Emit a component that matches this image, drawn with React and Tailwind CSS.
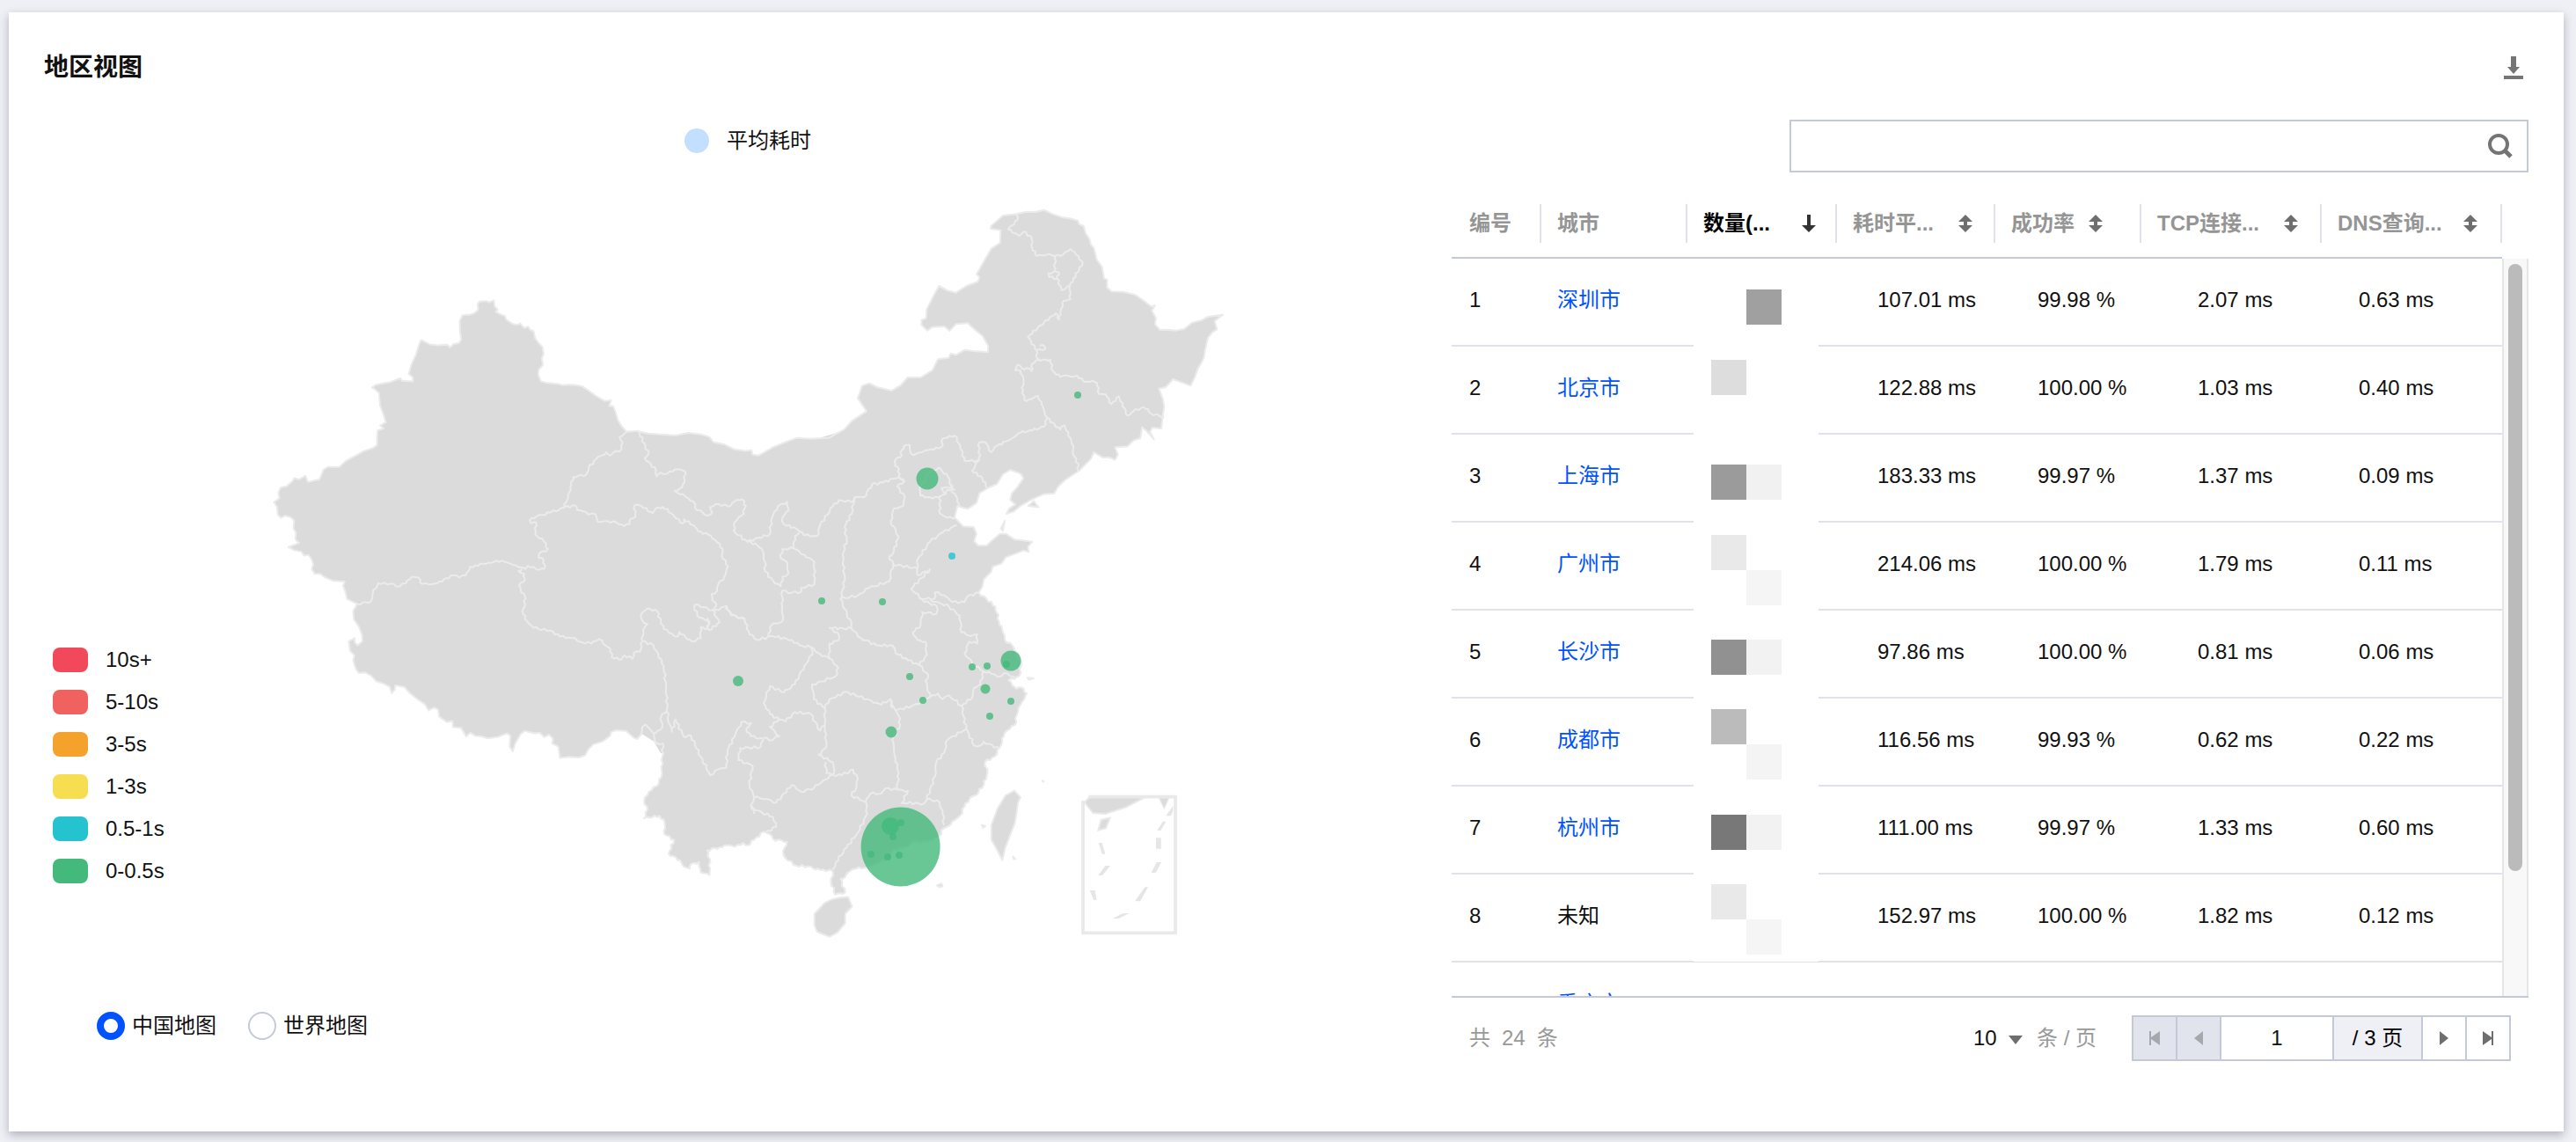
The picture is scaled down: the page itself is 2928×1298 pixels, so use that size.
import React, { useState } from 'react';

const LEVELS = [
    { label: '10s+', color: 'bg-[#f1495b]' },
    { label: '5-10s', color: 'bg-[#ef6260]' },
    { label: '3-5s', color: 'bg-[#f5a22d]' },
    { label: '1-3s', color: 'bg-[#f7de51]' },
    { label: '0.5-1s', color: 'bg-[#25c2d0]' },
    { label: '0-0.5s', color: 'bg-[#43b97c]' },
];

const COLUMNS = [
    { key: 'id', title: '编号', width: 'w-[102px]', head: 'pl-5', pad: 'pl-5' },
    { key: 'city', title: '城市', width: 'w-[166px]', head: 'pl-[18px]', pad: 'pl-[18px]' },
    { key: 'count', title: '数量(...', width: 'w-[170px]', head: 'pl-[18px]', pad: 'pl-8', sort: 'desc', gap: 'ml-9' },
    { key: 'cost', title: '耗时平...', width: 'w-[180px]', head: 'pl-[18px]', pad: 'pl-[46px]', sort: 'none', gap: 'ml-7' },
    { key: 'rate', title: '成功率', width: 'w-[166px]', head: 'pl-[18px]', pad: 'pl-12', sort: 'none', gap: 'ml-4' },
    { key: 'tcp', title: 'TCP连接...', width: 'w-[205px]', head: 'pl-[18px]', pad: 'pl-16', sort: 'none', gap: 'ml-7' },
    { key: 'dns', title: 'DNS查询...', width: 'w-[205px]', head: 'pl-[18px]', pad: 'pl-[42px]', sort: 'none', gap: 'ml-6' },
];

const ROWS = [
    { id: 1, city: '深圳市', cost: '107.01 ms', rate: '99.98 %', tcp: '2.07 ms', dns: '0.63 ms' },
    { id: 2, city: '北京市', cost: '122.88 ms', rate: '100.00 %', tcp: '1.03 ms', dns: '0.40 ms' },
    { id: 3, city: '上海市', cost: '183.33 ms', rate: '99.97 %', tcp: '1.37 ms', dns: '0.09 ms' },
    { id: 4, city: '广州市', cost: '214.06 ms', rate: '100.00 %', tcp: '1.79 ms', dns: '0.11 ms' },
    { id: 5, city: '长沙市', cost: '97.86 ms', rate: '100.00 %', tcp: '0.81 ms', dns: '0.06 ms' },
    { id: 6, city: '成都市', cost: '116.56 ms', rate: '99.93 %', tcp: '0.62 ms', dns: '0.22 ms' },
    { id: 7, city: '杭州市', cost: '111.00 ms', rate: '99.97 %', tcp: '1.33 ms', dns: '0.60 ms' },
    { id: 8, city: '未知', cost: '152.97 ms', rate: '100.00 %', tcp: '1.82 ms', dns: '0.12 ms' },
    { id: 9, city: '重庆市', count: '6,466', cost: '268.89 ms', rate: '100.00 %', tcp: '2.13 ms', dns: '0.88 ms' },
];

// [column, top, fill] of the blocks that hide the counts
const MOSAIC = [
    [1, 35, '#a0a0a0'],
    [0, 115, '#dddddd'],
    [0, 234, '#9b9b9b'],
    [1, 234, '#f1f1f1'],
    [0, 314, '#e9e9e9'],
    [1, 354, '#f5f5f5'],
    [0, 433, '#919191'],
    [1, 433, '#f2f2f2'],
    [0, 512, '#bbbbbb'],
    [1, 552, '#f4f4f4'],
    [0, 632, '#787878'],
    [1, 632, '#f2f2f2'],
    [0, 711, '#e9e9e9'],
    [1, 751, '#f5f5f5'],
];

// Map parts, each drawn in its own local grid
const WEST = {
    transform: 'translate(290 320) scale(0.35714)',
    outline:
        'M1220,475 1182,478 1168,462 1155,442 1147,415 1139,396 1127,396 1133,378 1112,380 1085,364 1060,346 1040,333 1018,329 1000,328 980,330 965,326 930,323 910,318 901,297 902,282 916,265 912,246 918,230 914,208 901,194 891,180 886,158 876,154 868,143 857,148 843,133 835,138 820,135 800,122 795,110 780,104 766,96 772,90 762,78 760,60 745,66 735,62 714,64 708,72 710,90 698,100 682,106 660,107 651,125 652,160 656,185 648,196 632,199 620,210 612,201 580,203 556,200 528,186 520,205 512,232 497,265 489,294 502,305 502,318 468,316 462,308 430,320 385,328 372,337 380,342 394,355 398,395 410,428 416,448 398,458 409,468 390,474 388,496 388,520 375,530 345,540 320,554 290,570 268,590 232,590 218,598 205,630 190,633 168,638 160,618 140,630 124,626 120,634 100,652 82,655 74,672 77,690 60,702 70,718 72,742 82,752 95,745 112,750 124,760 122,785 130,800 128,818 132,825 140,832 106,845 125,855 148,860 155,872 170,870 180,885 185,900 180,915 190,930 207,930 220,940 250,953 285,955 280,968 288,990 292,1010 312,1020 325,1026 312,1048 314,1075 330,1098 340,1125 341,1145 326,1158 317,1148 316,1135 298,1145 302,1175 316,1190 312,1205 316,1220 322,1235 330,1246 350,1244 370,1255 385,1272 410,1280 428,1290 435,1310 445,1298 446,1285 475,1290 490,1308 520,1332 540,1345 552,1365 568,1356 582,1362 586,1385 610,1402 628,1398 630,1418 655,1420 672,1448 685,1436 700,1446 718,1447 740,1454 770,1450 802,1438 812,1445 810,1480 820,1495 828,1470 845,1440 858,1430 890,1438 905,1436 920,1450 935,1442 948,1455 945,1470 965,1480 970,1516 1000,1513 1030,1515 1050,1508 1060,1490 1075,1474 1105,1464 1130,1446 1133,1434 1148,1428 1180,1430 1205,1452 1216,1456 1230,1440 1232,1418 1242,1410 1256,1424 1268,1438 1274,1472',
    close: 'L1290,1500 1568,1568 1568,540 1545,540 1520,530 1490,518 1458,512 1445,495 1400,484 1330,490 1270,485Z',
    borders:
        'M1182,478 1160,495 1170,512 1166,534 1140,544 1128,554 1118,543 1085,565 1062,592 1054,614 1012,622 1003,655 996,690 984,708 984,720 940,735 895,748 874,760 878,770 893,766 892,805 918,826 932,852 905,865 903,880 918,885 920,914 905,917 868,905 860,915 835,908' +
        'M860,915 830,903 805,895 785,888 742,895 700,903 684,908 670,935 650,942 632,935 600,948 580,960 550,963 525,958 520,942 498,940 480,960 460,970 430,962 392,960 375,990 368,1018 325,1026' +
        'M850,915 838,922 857,930 855,955 840,968 848,990 858,1000 858,1035 850,1050 865,1080 880,1095 902,1107 940,1110 970,1130 1010,1135 1040,1148 1070,1152 1095,1138 1115,1158 1130,1168 1135,1196 1152,1197 1165,1203 1175,1190 1200,1200 1205,1182 1225,1178 1232,1145' +
        'M984,718 1020,713 1025,728 1050,732 1060,742 1082,740 1090,765 1115,762 1130,768 1148,765 1175,778 1192,772 1195,755 1210,750 1208,712 1230,715 1265,738 1275,722 1298,717 1330,742 1360,770 1365,757 1400,780 1410,795 1450,808 1470,830 1488,850 1485,872 1505,907 1498,930 1490,950 1475,960 1470,985 1453,995 1455,1015 1468,1028 1455,1045 1400,1028 1398,1045 1415,1070 1445,1080 1440,1105 1418,1100 1418,1135 1390,1145 1370,1132 1350,1115 1345,1130 1318,1118 1300,1105 1280,1050 1250,1040 1228,1060 1232,1078 1248,1090 1235,1110 1232,1145' +
        'M1455,1045 1478,1085 1445,1110 1440,1070M1460,1050 1500,1032 1515,1062 1560,1075' +
        'M1312,1365 1292,1385 1295,1420 1275,1438 1268,1438' +
        'M1220,475 1252,548 1240,562 1276,600 1278,620 1290,608 1310,612 1320,604 1345,598 1368,604 1366,640 1352,658 1335,666 1370,685 1395,700 1400,720 1440,745 1455,735 1448,718 1475,708 1505,716 1525,700 1550,693 1562,715 1548,745 1527,765 1524,795',
};

const NORTH_EAST = {
    transform: 'translate(960 220) scale(0.33333)',
    outline:
        'M0,803 25,775 75,742 45,698 60,655 85,647 110,660 160,672 190,655 215,627 260,627 300,602 318,565 355,560 362,545 380,550 410,533 440,537 488,541 490,520 470,485 445,465 420,442 380,445 358,468 340,453 300,455 282,467 262,448 262,432 278,425 280,395 300,355 322,315 350,330 380,338 415,315 455,300 460,285 450,275 470,240 500,188 530,168 532,125 498,120 500,110 540,75 585,70 620,62 650,63 680,56 710,70 745,82 765,84 795,92 800,105 815,110 822,135 835,155 840,175 850,185 860,225 878,250 885,290 895,293 895,320 910,334 950,335 990,345 1020,365 1045,385 1058,382 1048,400 1062,425 1058,445 1075,465 1100,464 1130,467 1158,462 1185,440 1215,433 1240,420 1290,413 1262,435 1270,463 1255,472 1240,490 1230,530 1225,560 1215,580 1205,595 1195,625 1180,655 1120,633 1095,660 1072,665 1085,700 1090,725 1085,760 1080,802 1050,798 1042,812 1055,838 1030,810 1015,797 1008,835 985,842 965,862 922,865 932,890 922,908 905,900 880,900 850,882 840,905 820,925 800,945 750,978 728,1000 715,1022 680,1025 640,1042 600,1065 575,1085 552,1092 560,1075 582,1060 565,1045 570,1022 590,1000 610,970 600,955 565,942 540,957 520,990 487,1005 460,1022 450,1055 420,1075 400,1070 385,1065 375,1105 398,1128 405,1135 440,1137 450,1160 442,1185 455,1200 485,1200 500,1185 530,1160 550,1160 580,1180 610,1183 640,1187 625,1205 628,1222 610,1217 590,1225 550,1240 535,1262 505,1272 500,1290 475,1315 470,1340 457,1361',
    close: 'L440,1400 0,1400Z',
    borders:
        'M585,70 590,90 558,122 595,145 610,130 638,150 640,185 655,213 690,208 720,212 745,208 770,190 785,200 812,237 800,260 780,290 768,315 740,330 725,290 698,285 695,272 715,265 720,212' +
        'M725,290 730,268 715,265M768,315 770,360 748,365 738,395 732,430 720,408 680,440 625,488 655,535 685,530 680,518 665,520' +
        'M655,535 655,560 665,567M660,567 640,580 638,605 622,595 612,600 590,583 582,603 600,605 610,635 605,680 620,708 640,700 660,690 672,720 682,745 690,768' +
        'M660,567 702,567 710,605 735,625 760,620 780,625 795,622 820,643 845,638 860,645 868,683 890,685 910,718 935,692 965,757 985,742 1020,728 1035,735 1045,750 1090,762' +
        'M690,765 735,805 750,790 780,860 778,880 798,930 795,945' +
        'M690,768 680,795 640,808 600,815 575,832 550,845 520,860 500,882 480,848 458,850 460,910' +
        'M455,912 435,945 470,970 487,1005' +
        'M460,912 408,910 395,860 375,825 335,835 330,865 285,875 260,883 235,892 225,885 222,857 210,857 195,875 190,900 175,905 172,928 185,940 185,965 205,985' +
        'M255,1005 258,1030 300,1040 330,1030 345,1025 330,1005 365,1000 352,965 320,935 285,955 270,985 255,1005' +
        'M325,1030 325,1090 350,1105 378,1105M345,1025 350,1010 375,1010 355,985M365,1010 385,1040 390,1065',
};

const SOUTH = {
    transform: 'translate(700 420) scale(0.35714 0.42092)',
    coast:
        'M1155,603 1180,620 1208,640 1220,680 1232,710 1238,730 1262,745 1270,760 1288,785 1290,800 1283,828 1250,840 1275,862 1290,858 1308,875 1300,890 1288,905 1280,925 1275,935 1270,960 1245,975 1235,990 1222,1020 1205,1045 1175,1060 1182,1090 1172,1120 1145,1150 1125,1160 1110,1180 1095,1205 1070,1220 1060,1232 1035,1245 1030,1260 990,1275 950,1275 920,1290 880,1300 870,1315 830,1335 800,1345 765,1348 745,1355 730,1370 715,1375 730,1412 698,1418 685,1385 690,1355 660,1350 635,1350 620,1342 575,1340 540,1320 532,1300 545,1275 500,1268 490,1255 470,1248 440,1270 420,1285 405,1278 380,1288 355,1285 330,1290 290,1298 298,1320 298,1365 270,1358 265,1330 240,1335 235,1348 215,1342 205,1325 168,1308 185,1270 155,1255 155,1222 140,1205 90,1212 100,1190 90,1165 105,1140 130,1125 145,1100 150,1010 128,1008',
    close: 'L0,940 0,200 72,170 190,178 455,232 728,165 1060,380 1070,560Z',
    north: 'M72,167 100,173 190,178 230,171 270,175 298,182 310,196 345,202 375,215 410,220 432,218 435,230 455,232 500,210 540,196 575,185 620,187 680,184 720,165 728,161',
    northClose: 'L800,400 72,400Z',
    islands:
        'M720,1425 740,1425 752,1450 730,1470 730,1495 705,1520 680,1532 640,1518 632,1500 632,1470 665,1440 690,1430Z' +
        'M1268,1137 1288,1155 1280,1170 1275,1200 1270,1225 1240,1290 1230,1325 1215,1300 1195,1270 1195,1230 1215,1185 1240,1150Z' +
        'M1165,1230 1176,1233 1168,1237ZM1264,1315 1272,1322 1266,1322ZM1022,1393 1036,1388 1040,1395 1030,1398ZM1310,832 1330,834 1315,838ZM1312,368 1330,355 1345,372ZM1225,430 1238,408 1232,436ZM1358,1110 1362,1112 1359,1113Z',
    borders:
        'M376,430 376,437 418,465 490,445 497,400 515,370 545,357 550,380 530,400 535,418 575,430 600,448 640,450 650,420 690,370 710,352 750,358 760,345 790,345 815,310 850,305 900,290 918,300' +
        'M418,465 445,470 465,485 475,520 475,545 500,570 525,585 530,560 550,550 545,520 525,510 530,485 565,483 570,450 585,440' +
        'M565,483 600,500 632,520 632,580 590,590 590,600 560,603 530,597 530,640 530,680 495,690 485,720' +
        'M350,638 365,660 410,675 425,715 450,730 500,720 560,730 585,745 620,750 650,768 680,780 708,805 700,828 655,842 625,850 630,890 665,915' +
        'M620,750 625,770 600,800 570,850 535,872 490,855 470,900 490,930 520,945 490,965 520,990 500,1000 470,995' +
        'M520,945 540,950 570,925 620,930 650,975 665,960 665,915' +
        'M470,1000 430,990 415,970 430,955 400,952 380,985 355,1030 352,1075 325,1080 300,1095 270,1045 240,990 215,990 190,945 178,978 165,940 160,860 152,800 120,745 85,733' +
        'M470,1000 460,1020 395,1022 390,1055 435,1070 425,1120 440,1155 430,1175 440,1200M440,1155 480,1160 510,1170 560,1122 590,1140 630,1130 660,1110 690,1095' +
        'M430,1175 445,1190 500,1208 510,1235 475,1250' +
        'M665,960 670,1020 645,1040 690,1060 695,1090 670,1090 668,1060M690,1095 720,1095 755,1080 770,1105 765,1130 750,1150 795,1168 800,1200 770,1250 735,1290 700,1330 690,1350' +
        'M795,1168 810,1145 845,1145 860,1130 895,1135 930,1138 910,1170 980,1172 990,1160 1030,1168 1040,1200 1045,1230' +
        'M895,1135 900,1090 890,1050 885,1020 880,1000 905,960 900,935 890,920 875,895' +
        'M665,915 680,890 700,885 730,870 800,890 820,900 845,905 875,890 880,915M890,920 940,910 970,898 1000,885' +
        'M680,780 680,740 710,730 705,710 680,698 750,700 780,725 830,745 880,745 890,765 930,785 965,798 995,825 985,840 1000,885' +
        'M965,798 990,770 985,735 960,730 945,710 970,690 975,655 1020,660 1022,640 975,622' +
        'M760,345 750,390 728,425 735,460 722,500 728,570 715,620 735,660 750,685 750,700M715,620 770,610 805,590 870,572 882,525' +
        'M918,300 895,315 920,345 915,368 885,375 875,410 900,450 885,490 870,505 882,525 960,538 962,510 1000,465 1040,440 1085,420' +
        'M960,538 960,555 1000,540 940,592 975,620 1015,618 1015,602 1045,610 1070,628 1110,628 1120,612 1155,603' +
        'M1000,622 1030,630 1060,640 1095,665 1100,710 1130,720 1150,715 1150,740 1125,735 1110,765 1135,795 1170,815 1195,822 1215,830 1235,820 1270,830' +
        'M1170,815 1160,850 1140,860 1135,885 1100,908M1000,885 1025,875 1040,890 1060,880 1100,908 1115,970 1055,1000 1045,1035 1020,1060 1015,1100 990,1160' +
        'M1115,970 1140,1015 1160,1015 1170,1005 1222,1025',
};

const GREEN = '#43b97c';

// [x, y, radius, fill]
const CITIES = [
    [1225, 449, 4, GREEN],
    [1054, 544, 12.5, GREEN],
    [1082, 632, 4, '#25c2d0'],
    [934, 683, 4, GREEN],
    [1003, 684, 4, GREEN],
    [839, 774, 6, GREEN],
    [1034, 769, 4, GREEN],
    [1049, 796, 4, GREEN],
    [1013, 832, 6.5, GREEN],
    [1105, 758, 4, GREEN],
    [1122, 757, 4, GREEN],
    [1149, 751, 11.5, GREEN],
    [1144, 755, 4, GREEN],
    [1120, 783, 5.5, GREEN],
    [1149, 797, 4, GREEN],
    [1125, 814, 4, GREEN],
    [1012, 939, 10, GREEN],
    [1024, 935, 4, GREEN],
    [1015, 951, 4, GREEN],
    [990, 971, 4, GREEN],
    [1009, 974, 4, GREEN],
    [1022, 972, 4, GREEN],
    [1023.6, 962.5, 45, GREEN],
];

// Breaks long border segments into short uneven ones
const roughen = (d) =>
    d
        .split('M')
        .filter(Boolean)
        .map((line) => {
            const points = line.split(' ').map((pair) => pair.split(',').map(Number));
            const out = [points[0]];
            for (let i = 1; i < points.length; i++) {
                const [x0, y0] = points[i - 1];
                const [x1, y1] = points[i];
                const length = Math.hypot(x1 - x0, y1 - y0);
                const steps = Math.max(1, Math.round(length / 9));
                for (let s = 1; s < steps; s++) {
                    const t = s / steps;
                    const shift = Math.sin(x0 * 12.9 + y0 * 7.3 + s * 2.4) * 3.5;
                    out.push([
                        Math.round(x0 + (x1 - x0) * t - ((y1 - y0) / length) * shift),
                        Math.round(y0 + (y1 - y0) * t + ((x1 - x0) / length) * shift),
                    ]);
                }
                out.push([x1, y1]);
            }
            return 'M' + out.map((p) => p.join(',')).join(' ');
        })
        .join('');

function Line({ d }) {
    return <path d={d} fill="none" stroke="#ebebeb" strokeWidth="2" strokeLinejoin="round" vectorEffect="non-scaling-stroke" />;
}

function ChinaMap() {
    return (
        <svg viewBox="50 174 1600 936" className="block w-full" role="img" aria-label="中国地图">
            <g fill="#dbdbdb">
                <path transform={WEST.transform} d={WEST.outline + WEST.close} />
                <path transform={NORTH_EAST.transform} d={NORTH_EAST.outline + NORTH_EAST.close} />
                <g transform={SOUTH.transform}>
                    <path d={SOUTH.coast + SOUTH.close} />
                    <path d={SOUTH.north + SOUTH.northClose} />
                    <path d={SOUTH.islands} />
                </g>
            </g>
            <g transform={WEST.transform}>
                <Line d={WEST.outline} />
                <Line d={roughen(WEST.borders)} />
            </g>
            <g transform={NORTH_EAST.transform}>
                <Line d={NORTH_EAST.outline} />
                <Line d={roughen(NORTH_EAST.borders)} />
            </g>
            <g transform={SOUTH.transform}>
                <Line d={roughen(SOUTH.coast)} />
                <Line d={SOUTH.north} />
                <Line d={SOUTH.islands} />
                <Line d={roughen(SOUTH.borders)} />
            </g>

            {/* South China Sea inset */}
            <g transform="translate(1160 860) scale(0.33333)">
                <path d="M218,155 236,138 425,138 360,172 290,195 247,192Z" fill="#dbdbdb" stroke="#e9e9e9" strokeWidth="6" />
                <path d="M472,140H506L490,177Z" fill="#dbdbdb" stroke="#e9e9e9" strokeWidth="4" />
                <path d="M213,601V150M232,137H528V601H208" fill="none" stroke="#e9e9e9" strokeWidth="11" />
                <path d="M275,215 305,209 291,244 265,251Z" fill="#dbdbdb" stroke="#e9e9e9" strokeWidth="6" />
                <path
                    d="M266,294H278L289,332H278ZM289,372H306L279,405H265ZM236,456H254L259,489H249ZM314,552 350,534H370L335,552ZM390,493 424,445H435L408,493ZM446,396 464,360H480L461,396ZM462,277H479V314H462ZM466,252 485,221H496L478,252ZM496,202 520,167V185L513,202Z"
                    fill="#e6e6e6"
                />
            </g>

            {CITIES.map(([x, y, r, fill]) => (
                <circle key={`${x}-${y}`} cx={x} cy={y} r={r} fill={fill} fillOpacity="0.8" />
            ))}
        </svg>
    );
}

function SortIcon({ sort }) {
    if (sort === 'desc') {
        return (
            <svg viewBox="0 0 16 20" className="w-4 h-5" fill="#333">
                <path d="M6 0h4v12h6l-8 8-8-8h6z" />
            </svg>
        );
    }
    return (
        <svg viewBox="0 0 16 20" className="w-4 h-5" fill="#6e6e6e">
            <path d="M8 0l8 8h-6v4h6l-8 8-8-8h6V8H0z" />
        </svg>
    );
}

function RegionTable() {
    return (
        <div className="flex h-[918px] mt-5 overflow-hidden border-b-2 border-[#c4c9d9]">
            <div className="relative flex-1">
                <table className="w-full table-fixed border-separate border-spacing-0 text-2xl leading-8 text-left">
                    <thead>
                        <tr>
                            {COLUMNS.map((col) => (
                                <th key={col.key} className={`${col.width} h-[78px] p-0 border-b-2 border-[#c4c9d9]`}>
                                    <div
                                        className={`flex items-center h-11 ${col.head} border-r-2 border-[#dfe2ea] whitespace-nowrap ${
                                            col.sort === 'desc' ? 'text-black' : 'text-[#959595]'
                                        }`}
                                    >
                                        {col.title}
                                        {col.sort && (
                                            <button type="button" aria-label="排序" className={col.gap}>
                                                <SortIcon sort={col.sort} />
                                            </button>
                                        )}
                                    </div>
                                </th>
                            ))}
                        </tr>
                    </thead>
                    <tbody>
                        {ROWS.map((row) => (
                            <tr key={row.id} className="h-[100px] align-top">
                                {COLUMNS.map((col) => (
                                    <td key={col.key} className={`${col.pad} py-0 pr-0 pt-[31px] border-b-2 border-[#dfe2ea] whitespace-nowrap`}>
                                        {col.key === 'city' && row.city !== '未知' ? (
                                            <a href="#city" className="text-[#0052ff]">{row.city}</a>
                                        ) : (
                                            row[col.key]
                                        )}
                                    </td>
                                ))}
                            </tr>
                        ))}
                    </tbody>
                </table>

                {/* Blocks over the counts */}
                <svg viewBox="0 0 142 799" className="absolute top-[78px] left-[23%] w-[142px] h-[799px]">
                    <rect width="142" height="799" fill="#fff" />
                    {MOSAIC.map(([col, top, fill]) => (
                        <rect key={`${col}-${top}`} x={20 + col * 40} y={top} width="40" height="40" fill={fill} />
                    ))}
                </svg>
            </div>

            {/* Scrollbar */}
            <div className="w-[30px] mt-[78px] pt-1.5 bg-[#f8f8f8] border-x-2 border-[#e6e6e6]">
                <div className="w-4 h-[690px] mx-auto rounded-full bg-[#bbb]" />
            </div>
        </div>
    );
}

function PageButton({ label, path, disabled }) {
    return (
        <button
            type="button"
            aria-label={label}
            disabled={disabled}
            className="flex items-center justify-center w-[50px] border-r-2 border-[#c4c9d9] text-[#6e6e6e] last:w-12 last:border-r-0 disabled:bg-[#e1e4ec] disabled:text-[#a6a8ad]"
        >
            <svg viewBox="0 0 14 16" className="w-3.5 h-4" fill="currentColor">
                <path d={path} />
            </svg>
        </button>
    );
}

function Pagination() {
    return (
        <div className="flex items-center justify-between mt-5 px-5 text-2xl text-[#999]">
            <div className="flex gap-[13px]">
                <span>共</span>
                <span>24</span>
                <span>条</span>
            </div>
            <div className="flex items-center">
                <div className="relative flex items-center">
                    <select aria-label="每页条数" defaultValue="10" className="appearance-none w-14 text-[#111]">
                        <option>10</option>
                        <option>20</option>
                    </select>
                    <svg viewBox="0 0 16 10" className="absolute right-0 w-4 h-2.5 mt-1 pointer-events-none" fill="#6e6e6e">
                        <path d="M0 0h16l-8 10z" />
                    </svg>
                </div>
                <span className="ml-4 mr-10">条 / 页</span>
                <div className="flex h-[52px] border-2 border-[#c4c9d9]">
                    <PageButton label="首页" path="M1 0h2v7l10-7v16L3 9v7H1z" disabled />
                    <PageButton label="上一页" path="M12 0v16L2 8z" disabled />
                    <input aria-label="页码" defaultValue="1" className="w-32 text-center text-[#111] border-r-2 border-[#c4c9d9] outline-none" />
                    <span className="flex items-center justify-center w-[101px] text-black bg-[#eff0f5] border-r-2 border-[#c4c9d9]">/ 3 页</span>
                    <PageButton label="下一页" path="M2 0v16l10-8z" />
                    <PageButton label="末页" path="M1 0l10 7V0h2v16h-2V9L1 16z" />
                </div>
            </div>
        </div>
    );
}

function App() {
    const [area, setArea] = useState('china');
    const areas = [
        { value: 'china', label: '中国地图' },
        { value: 'world', label: '世界地图' },
    ];

    return (
        <div className="min-h-screen pt-3.5 pr-3.5 pb-3 pl-2.5 bg-[#eff0f5] font-['Liberation_Sans','Noto_Sans_CJK_SC',sans-serif] text-[#111]">
            <section className="px-10 pt-10 pb-20 bg-white shadow-[0_4px_10px_rgba(54,58,80,0.35)]">
                {/* Title */}
                <header className="flex items-center justify-between h-[46px]">
                    <h2 className="text-[28px] font-bold">地区视图</h2>
                    <button type="button" aria-label="下载" className="mr-1.5">
                        <svg viewBox="0 0 22 26" className="w-[22px] h-[26px]" fill="#757575">
                            <path d="M8 0h6v12h4l-7 8-7-8h4zM0 22h22v4H0z" />
                        </svg>
                    </button>
                </header>

                <div className="grid grid-cols-[17fr_13fr]">
                    {/* Map */}
                    <div className="relative pt-[46px]">
                        <div className="flex items-center justify-center gap-5 h-7 text-2xl">
                            <span className="w-7 h-7 rounded-full bg-[#c3dfff]" />
                            平均耗时
                        </div>
                        <div className="relative">
                            <ChinaMap />
                            <ul className="absolute left-2.5 bottom-[106px] flex flex-col gap-5 text-2xl leading-7">
                                {LEVELS.map((level) => (
                                    <li key={level.label} className="flex items-center gap-5">
                                        <span className={`w-10 h-7 rounded-lg ${level.color}`} />
                                        {level.label}
                                    </li>
                                ))}
                            </ul>
                        </div>
                        <div className="flex gap-9 mt-10 ml-[60px] text-2xl leading-8">
                            {areas.map((item) => (
                                <label key={item.value} className="flex items-center gap-2">
                                    <input
                                        type="radio"
                                        name="area"
                                        checked={area === item.value}
                                        onChange={() => setArea(item.value)}
                                        className="appearance-none w-8 h-8 rounded-full bg-white border-2 border-[#c4cad8] checked:border-8 checked:border-[#0052ff]"
                                    />
                                    {item.label}
                                </label>
                            ))}
                        </div>
                    </div>

                    {/* Table */}
                    <div className="pt-9">
                        <div className="flex items-center justify-between w-[840px] max-w-full h-[60px] ml-auto pr-4 border-2 border-[#c4c9d9]">
                            <input aria-label="搜索" className="flex-1 h-full px-5 text-2xl outline-none" />
                            <button type="button" aria-label="搜索">
                                <svg viewBox="0 0 28 28" className="w-7 h-7" fill="none" stroke="#757575">
                                    <circle cx="12" cy="12" r="10" strokeWidth="4" />
                                    <path d="M18 18l8 8" strokeWidth="5" />
                                </svg>
                            </button>
                        </div>
                        <RegionTable />
                        <Pagination />
                    </div>
                </div>
            </section>
        </div>
    );
}

export default App;
